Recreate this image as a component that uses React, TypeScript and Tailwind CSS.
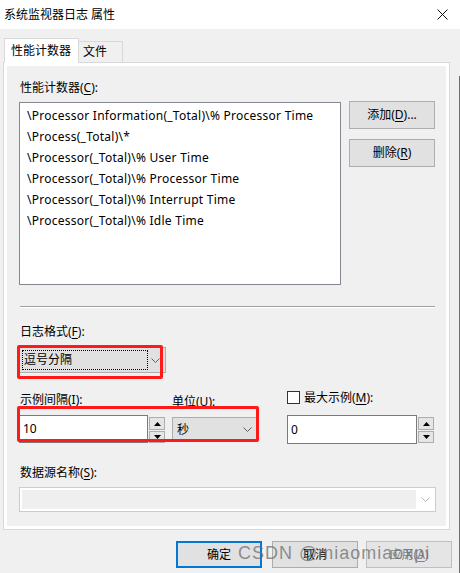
import type { ReactNode } from "react";

const counters = [
  "\\Processor Information(_Total)\\% Processor Time",
  "\\Process(_Total)\\*",
  "\\Processor(_Total)\\% User Time",
  "\\Processor(_Total)\\% Processor Time",
  "\\Processor(_Total)\\% Interrupt Time",
  "\\Processor(_Total)\\% Idle Time",
];

// mnemonic letter, underlined like the Win32 dialog
function U({ children }: { children: ReactNode }) {
  return <span className="underline underline-offset-[2px]">{children}</span>;
}

function Chevron({ color = "#606060" }: { color?: string }) {
  return (
    <svg width="9" height="5" viewBox="0 0 9 5" fill="none">
      <path d="M0.5 0.5L4.5 4.5L8.5 0.5" stroke={color} strokeWidth="1" />
    </svg>
  );
}

function Spin() {
  return (
    <div className="flex flex-col gap-[1px] mt-[2px] ml-[1px]">
      <div className="w-[16px] h-[13px] border border-[#adadad] bg-[#e5e5e5] flex items-center justify-center">
        <svg width="7" height="4" viewBox="0 0 7 4">
          <polygon points="0,4 3.5,0 7,4" fill="#000" />
        </svg>
      </div>
      <div className="w-[16px] h-[12px] border border-[#adadad] bg-[#e5e5e5] flex items-center justify-center">
        <svg width="7" height="4" viewBox="0 0 7 4">
          <polygon points="0,0 7,0 3.5,4" fill="#000" />
        </svg>
      </div>
    </div>
  );
}

export default function App() {
  return (
    <div className="relative w-[460px] h-[573px] overflow-hidden bg-[#f0f0f0] text-[12px] text-black font-['Noto_Sans','Noto_Sans_CJK_SC',sans-serif]">
      {/* Title bar */}
      <div className="h-[29px] bg-white flex items-center justify-between pl-[4px] pr-[12px]">
        <span className="leading-[16px]">系统监视器日志 属性</span>
        <svg width="11" height="11" viewBox="0 0 11 11" fill="none">
          <path d="M0.5 0.5L10.5 10.5M10.5 0.5L0.5 10.5" stroke="#111" strokeWidth="1" />
        </svg>
      </div>

      <div className="px-[3px] pt-[9px]">
        {/* Tabs */}
        <div className="flex items-end h-[24px]">
          <div className="relative z-10 ml-[1px] -mb-px w-[75px] h-[25px] bg-white border border-b-0 border-[#d9d9d9] flex items-center pl-[6px] leading-[16px]">
            性能计数器
          </div>
          <div className="w-[44px] h-[21px] bg-[#f0f0f0] border border-l-0 border-b-0 border-[#d9d9d9] flex items-center pl-[4px] leading-[16px]">
            文件
          </div>
        </div>

        {/* Tab page */}
        <div className="w-[447px] h-[468px] border border-[#d9d9d9] bg-white p-[3px]">
          <div className="h-full bg-[#f0f0f0] flex flex-col pl-[12px]">
            <div className="mt-[14px] ml-[1px] h-[16px] leading-[16px]">
              性能计数器(<U>C</U>):
            </div>

            <div className="mt-[5px] flex items-start">
              <div className="mt-[1px] w-[322px] h-[183px] border border-[#828790] bg-white pt-[2px] pl-[7px] tracking-[0.25px]">
                {counters.map((c) => (
                  <div key={c} className="h-[21px] leading-[21px] whitespace-nowrap">
                    {c}
                  </div>
                ))}
              </div>
              <div className="ml-[8px] flex flex-col gap-[10px]">
                <button className="w-[86px] h-[28px] border border-[#adadad] bg-[#e1e1e1] leading-[16px]">
                  添加(<U>D</U>)...
                </button>
                <button className="w-[86px] h-[28px] border border-[#adadad] bg-[#e1e1e1] leading-[16px]">
                  删除(<U>R</U>)
                </button>
              </div>
            </div>

            <div className="mt-[21px] ml-[1px] w-[415px] border-t border-b border-t-[#a0a0a0] border-b-white" />

            <div className="mt-[16px] ml-[1px] h-[16px] leading-[16px]">
              日志格式(<U>F</U>):
            </div>
            <div className="mt-[7px] w-[147px] h-[26px] border border-[#adadad] bg-[#e1e1e1] flex items-center pl-[2px] pr-[5px]">
              <div className="w-[126px] h-[20px] border border-dotted border-black flex items-center pl-[1px] leading-[16px]">
                逗号分隔
              </div>
              <div className="flex-1 flex justify-end">
                <Chevron />
              </div>
            </div>

            <div className="mt-[18px] flex items-start">
              <div className="mt-[1px] w-[146px] flex flex-col">
                <div className="ml-[1px] h-[16px] leading-[16px]">
                  示例间隔(<U>I</U>):
                </div>
                <div className="mt-[7px] flex">
                  <div className="w-[129px] h-[28px] border border-[#7a7a7a] bg-white flex items-center pl-[3px] leading-[16px]">
                    10
                  </div>
                  <Spin />
                </div>
              </div>

              <div className="ml-[7px] mt-[3px] w-[86px] flex flex-col">
                <div className="h-[16px] leading-[16px]">
                  单位(<U>U</U>):
                </div>
                <div className="mt-[7px] h-[25px] border border-[#adadad] bg-[#e1e1e1] flex items-center justify-between pl-[4px] pr-[5px] leading-[16px]">
                  <span>秒</span>
                  <Chevron />
                </div>
              </div>

              <div className="ml-[29px] w-[147px] flex flex-col">
                <div className="h-[13px] flex items-center gap-[4px]">
                  <div className="w-[13px] h-[13px] border border-[#333] bg-white" />
                  <span className="leading-[16px]">
                    最大示例(<U>M</U>):
                  </span>
                </div>
                <div className="mt-[11px] flex">
                  <div className="w-[130px] h-[29px] border border-[#7a7a7a] bg-white flex items-center pl-[3px] leading-[16px]">
                    0
                  </div>
                  <Spin />
                </div>
              </div>
            </div>

            <div className="mt-[21px] ml-[1px] h-[16px] leading-[16px]">
              数据源名称(<U>S</U>):
            </div>
            <div className="mt-[6px] w-[417px] h-[25px] border border-[#cccccc] bg-white flex items-center pl-[2px]">
              <div className="w-[394px] h-[19px] bg-[#efefef]" />
              <div className="flex-1 flex justify-center">
                <Chevron color="#b5b5b5" />
              </div>
            </div>
          </div>
        </div>
      </div>

      {/* Dialog buttons */}
      <div className="mt-[11px] flex justify-end pr-[8px]">
        <button className="w-[86px] h-[27px] border-2 border-[#0078d7] bg-[#e1e1e1] leading-[16px]">确定</button>
        <button className="ml-[10px] w-[86px] h-[27px] border border-[#adadad] bg-[#e1e1e1] leading-[16px]">取消</button>
        <button className="ml-[8px] w-[86px] h-[27px] border border-[#bfbfbf] bg-[#e5e5e5] text-[#838383] leading-[16px]">
          应用(<U>A</U>)
        </button>
      </div>

      {/* annotation boxes drawn over the dialog */}
      <div className="absolute left-[17px] top-[345px] w-[146px] h-[34px] border-[3px] border-[#ff1a1a] rounded-[2px] pointer-events-none" />
      <div className="absolute left-[17px] top-[406px] w-[242px] h-[36px] border-[3px] border-[#ff1a1a] rounded-[2px] pointer-events-none" />

      {/* window edge */}
      <div className="absolute right-0 top-[76px] bottom-0 w-[1px] bg-[#6d6d6d]" />

      {/* watermark */}
      <div className="absolute left-[238px] top-[540px] text-[18px] leading-[26px] tracking-[1px] text-[#6e6e6e]/75 whitespace-nowrap pointer-events-none font-['Liberation_Sans',sans-serif]">
        CSDN @miaomiaoxpi
      </div>
    </div>
  );
}
